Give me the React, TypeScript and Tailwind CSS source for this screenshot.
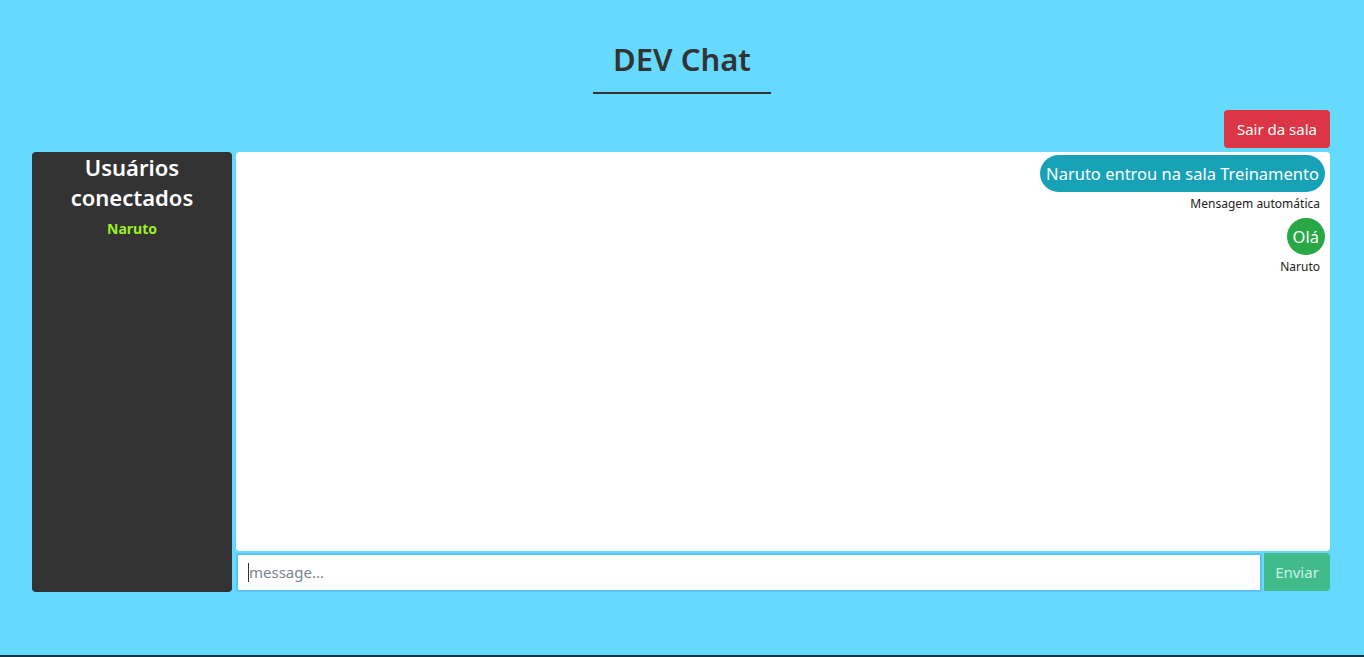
import React from 'react';

const messages = [
  { text: 'Naruto entrou na sala Treinamento', author: 'Mensagem automática', color: 'bg-[#17a2b8]' },
  { text: 'Olá', author: 'Naruto', color: 'bg-[#28a745]' },
];

export default function App() {
  return (
    <div className="h-[657px] flex flex-col bg-[#66d9ff] font-['Noto_Sans','Open_Sans',sans-serif] text-[#333] overflow-hidden">
      <div className="flex-1">
        {/* header */}
        <div className="flex justify-center pt-[40px]">
          <h1 className="px-[20px] pb-[14px] border-b-2 border-[#333] text-[31px] leading-[38px] font-semibold">DEV Chat</h1>
        </div>

        <div className="ml-[32px] w-[1298px] mt-[16px]">
          <div className="flex justify-end mb-[4px]">
            <button className="h-[38px] px-[13px] rounded bg-[#dc3545] text-white text-[15px]">Sair da sala</button>
          </div>

          <div className="flex gap-[4px] h-[440px]">
            {/* users sidebar */}
            <div className="w-[200px] bg-[#333] rounded-sm flex flex-col items-center">
              <h2 className="text-white text-[22px] leading-[30px] font-semibold text-center">Usuários<br />conectados</h2>
              <p className="mt-[6px] text-[#9cf01f] text-[14px] font-bold">Naruto</p>
            </div>

            {/* chat */}
            <div className="flex-1 flex flex-col gap-[2px]">
              <div className="flex-1 bg-white rounded flex flex-col items-end pt-[3px] pr-[5px] gap-[4px]">
                {messages.map((m) => (
                  <div key={m.text} className="flex flex-col items-end">
                    <div className={`${m.color} text-white text-[16.5px] h-[37px] leading-[37px] px-[6px] rounded-full min-w-[37px] text-center`}>
                      {m.text}
                    </div>
                    <span className="text-[12px] leading-[20px] mt-[2px] mr-[5px] text-[#222]">{m.author}</span>
                  </div>
                ))}
              </div>
              <div className="flex h-[39px]">
                <div className="flex-1 bg-white border-2 border-[#5cc3f7] rounded-[3px] flex items-center pl-[10px]">
                  <span className="w-px h-[19px] bg-[#333]" />
                  <span className="text-[15px] text-[#7a8590]">message...</span>
                </div>
                <button className="ml-[2px] w-[66px] h-[38px] rounded-r bg-[#42bb8a] text-[#c9f3ea] text-[15px]">Enviar</button>
              </div>
            </div>
          </div>
        </div>
      </div>
      <div className="h-[2px] bg-[#0f3447]" />
    </div>
  );
}
